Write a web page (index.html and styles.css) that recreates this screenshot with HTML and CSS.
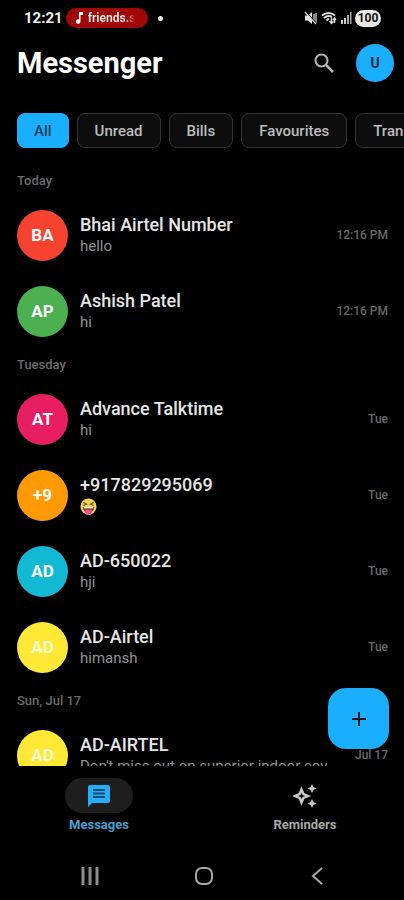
FILE: index.html
```html
<!DOCTYPE html>
<html lang="en">
<head>
<meta charset="utf-8">
<meta name="viewport" content="width=device-width, initial-scale=1">
<title>Messenger</title>
<link rel="stylesheet" href="styles.css">
</head>
<body>
<div class="status-bar">
  <span class="clock">12:21</span>
  <span class="media-pill">
    <svg width="9" height="12" viewBox="0 0 9 12" aria-hidden="true"><path d="M4 0h4v3H5.500v6.500A2.300 2.300 0 1 1 4 7.400z" fill="#fff"/></svg>
    <span class="media-title">friends.s</span>
  </span>
  <span class="status-dot"></span>
  <span class="status-icons">
    <svg width="14" height="14" viewBox="0 0 14 14" aria-hidden="true"><path d="M1 4.500h3L8 1v12L4 9.500H1z" fill="#e6e6e6"/><path d="M10 3v8M12 2v10" stroke="#bbb" stroke-width="1.500"/><path d="M2 1l10 11" stroke="#000" stroke-width="1.200"/><path d="M1 1l11 12" stroke="#ddd" stroke-width="1.200"/></svg>
    <svg width="16" height="14" viewBox="0 0 16 14" fill="none" aria-hidden="true"><path d="M1 4.500Q7.500-.5 14 4.500M3 7Q7 3.500 11 6M5.500 9.500l2.500-2" stroke="#ddd" stroke-width="1.900"/><path d="M10.500 12V6.500M8.500 10l2 2.500 2-2M13.500 12V7l-1.500 2m1.500-2L15 9" stroke="#ddd" stroke-width="1.400"/></svg>
    <svg width="12" height="12" viewBox="0 0 12 12" aria-hidden="true"><path d="M1 8h2v4H1zM4 6h2v6H4z" fill="#ccc"/><path d="M7 3h2v9H7zM10 0h1.500v12H10z" fill="#aaa"/></svg>
    <span class="battery">100</span>
  </span>
</div>

<header class="app-header">
  <h1>Messenger</h1>
  <button class="icon-button" type="button" aria-label="Search">
    <svg width="20" height="20" viewBox="0 0 20 20" fill="none" stroke="#b4b4b4" stroke-width="2"><circle cx="7.500" cy="7.500" r="6"/><path d="M12 12l7 7" stroke-width="2.500"/></svg>
  </button>
  <button class="profile" type="button" aria-label="Profile">U</button>
</header>

<nav class="filters" aria-label="Filters">
  <button class="chip chip-active" type="button">All</button>
  <button class="chip" type="button">Unread</button>
  <button class="chip" type="button">Bills</button>
  <button class="chip" type="button">Favourites</button>
  <button class="chip" type="button">Transactions</button>
</nav>

<main class="content">
  <div class="threads">
    <h2>Today</h2>
    <ul>
      <li class="thread"><span class="avatar red">BA</span><div class="summary"><p class="name">Bhai Airtel Number</p><p class="preview">hello</p></div><time>12:16 PM</time></li>
      <li class="thread"><span class="avatar green">AP</span><div class="summary"><p class="name">Ashish Patel</p><p class="preview">hi</p></div><time>12:16 PM</time></li>
    </ul>
    <h2>Tuesday</h2>
    <ul>
      <li class="thread"><span class="avatar pink">AT</span><div class="summary"><p class="name">Advance Talktime</p><p class="preview">hi</p></div><time>Tue</time></li>
      <li class="thread"><span class="avatar orange">+9</span><div class="summary"><p class="name">+917829295069</p><p class="preview">
        <svg class="emoji" width="17" height="17" viewBox="0 0 18 18" role="img" aria-label="Squinting face with tongue"><circle cx="9" cy="9" r="8.500" fill="#fbd552"/><path d="M3.500 4.500L7 6.500 3.500 8M14.500 4.500L11 6.500 14.500 8" fill="none" stroke="#6b4a1e" stroke-width="1.200"/><path d="M3 9.500h12c0 4-2.500 6-6 6s-6-2-6-6z" fill="#8b2f2c"/><path d="M4 9.500h10v1.500H4z" fill="#fff"/><path d="M5.500 12.500h7V15a3.500 3 0 0 1-7 0z" fill="#f0568d"/></svg>
      </p></div><time>Tue</time></li>
      <li class="thread"><span class="avatar cyan">AD</span><div class="summary"><p class="name">AD-650022</p><p class="preview">hji</p></div><time>Tue</time></li>
      <li class="thread"><span class="avatar yellow">AD</span><div class="summary"><p class="name">AD-Airtel</p><p class="preview">himansh</p></div><time>Tue</time></li>
    </ul>
    <h2>Sun, Jul 17</h2>
    <ul>
      <li class="thread"><span class="avatar yellow">AD</span><div class="summary"><p class="name">AD-AIRTEL</p><p class="preview">Don't miss out on superior indoor cov</p></div><time>Jul 17</time></li>
    </ul>
  </div>
  <button class="compose" type="button" aria-label="New message">
    <svg width="16" height="16" viewBox="0 0 16 16" stroke="#07121a" stroke-width="2"><path d="M8 1v14M1 8h14"/></svg>
  </button>
</main>

<nav class="tabs" aria-label="Main">
  <a class="tab tab-active" href="#messages">
    <span class="tab-icon"><svg width="24" height="24" viewBox="0 0 24 24" aria-hidden="true"><path d="M3 1h18a2 2 0 0 1 2 2v14a2 2 0 0 1-2 2H5l-4 4V3a2 2 0 0 1 2-2z" fill="#22aef8"/><path d="M6 6h12M6 9.500h12M6 13h12" stroke="#124a6b" stroke-width="2"/></svg></span>
    Messages
  </a>
  <a class="tab" href="#reminders">
    <span class="tab-icon"><svg width="24" height="24" viewBox="0 0 24 24" aria-hidden="true"><path d="M8.500 5.500l1.900 4.600L15 12l-4.600 1.900-1.900 4.600-1.900-4.600L2 12l4.600-1.900z" fill="none" stroke="#c6c6c6" stroke-width="2.500"/><path d="M19 0l1.400 3.100L23.500 4.500l-3.100 1.400L19 9l-1.400-3.100-3.100-1.400 3.100-1.400zM19 15l1.400 3.100 3.100 1.400-3.100 1.400L19 24l-1.400-3.100-3.100-1.400 3.100-1.400z" fill="#c6c6c6"/></svg></span>
    Reminders
  </a>
</nav>

<div class="system-nav">
  <button class="icon-button" type="button" aria-label="Recent apps"><svg width="18" height="18" viewBox="0 0 18 18" stroke="#8c8c8c" stroke-width="3"><path d="M2 0v18M9 0v18M16 0v18"/></svg></button>
  <button class="icon-button" type="button" aria-label="Home"><svg width="20" height="20" viewBox="0 0 20 20" fill="none" stroke="#a8a8a8" stroke-width="2"><rect x="2" y="2" width="16" height="16" rx="6"/></svg></button>
  <button class="icon-button" type="button" aria-label="Back"><svg width="12" height="18" viewBox="0 0 12 18" fill="none" stroke="#a8a8a8" stroke-width="2"><path d="M11 1L2 9l9 8"/></svg></button>
</div>
</body>
</html>
```

FILE: styles.css
```css
* {
  box-sizing: border-box;
}

body {
  display: flex;
  flex-direction: column;
  height: 100vh;
  margin: 0;
  background: #000;
  color: #e6e6e6;
  font-family: Roboto, "Liberation Sans", sans-serif;
}

h1, h2, p, ul {
  margin: 0;
  padding: 0;
}

button {
  padding: 0;
  border: 0;
  font-family: inherit;
  cursor: pointer;
}

svg {
  display: block;
}

.status-bar {
  display: flex;
  align-items: center;
  height: 36px;
  padding: 0 23px 0 24px;
}

.clock {
  color: #f0f0f0;
  font-size: 15px;
  font-weight: 700;
}

.media-pill {
  display: flex;
  align-items: center;
  gap: 4px;
  width: 82px;
  height: 20px;
  margin-left: 3px;
  padding: 0 9px;
  border-radius: 10px;
  background: #a00808;
}

.media-title {
  overflow: hidden;
  background: linear-gradient(90deg, #eee 80%, #a00808);
  background-clip: text;
  color: transparent;
  font-size: 12px;
  font-weight: 700;
}

.status-dot {
  width: 5px;
  height: 5px;
  margin-left: 10px;
  border-radius: 50%;
  background: #eee;
}

.status-icons {
  display: flex;
  align-items: center;
  gap: 3px;
  margin-left: auto;
}

.battery {
  width: 26px;
  border-radius: 9px;
  background: #e8e8e8;
  color: #111;
  font-size: 12px;
  font-weight: 700;
  line-height: 17px;
  text-align: center;
}

.app-header {
  display: flex;
  align-items: center;
  height: 54px;
  padding: 0 10px 0 17px;
}

h1 {
  flex: 1;
  color: #fff;
  font-size: 29px;
  font-weight: 700;
}

.icon-button {
  display: grid;
  place-items: center;
  width: 40px;
  height: 40px;
  background: none;
}

.profile {
  width: 38px;
  height: 38px;
  margin-left: 12px;
  border-radius: 50%;
  background: #1aaefe;
  color: #07293d;
  font-size: 14px;
  font-weight: 700;
}

.filters {
  display: flex;
  gap: 8px;
  padding: 23px 0 17px 17px;
  overflow: hidden;
}

.chip {
  flex: none;
  height: 35px;
  padding: 0 17px;
  border: 1px solid #343434;
  border-radius: 8px;
  background: #0d0d0d;
  color: #bcbcbc;
  font-size: 15px;
  font-weight: 500;
}

.chip-active {
  padding: 0 16px;
  border-color: #1aaefe;
  background: #1aaefe;
  color: #0a3e5c;
}

.content {
  position: relative;
  flex: 1;
  min-height: 0;
}

.threads {
  height: 100%;
  overflow-y: auto;
  scrollbar-width: none;
}

h2 {
  padding-left: 17px;
  color: #6c6c6c;
  font-size: 13px;
  font-weight: 500;
  line-height: 32px;
}

ul {
  list-style: none;
}

.thread {
  display: flex;
  align-items: center;
  height: 76px;
  padding: 0 16px 0 17px;
}

.avatar {
  flex: none;
  width: 51px;
  border-radius: 50%;
  color: #fff;
  font-size: 17px;
  font-weight: 700;
  line-height: 51px;
  text-align: center;
}

.red { background: #f6432f; }
.green { background: #4caf50; }
.pink { background: #e81e63; }
.orange { background: #ff9a04; }
.cyan { background: #12b9d3; }
.yellow { background: #ffe836; color: #fffbd0; }

.summary {
  flex: 1;
  min-width: 0;
  padding-left: 12px;
}

.name {
  color: #e6e6e6;
  font-size: 18px;
  font-weight: 500;
  line-height: 22px;
}

.preview {
  height: 20px;
  overflow: hidden;
  color: #929292;
  font-size: 15px;
  line-height: 20px;
  white-space: nowrap;
}

.emoji {
  margin-top: 2px;
}

time {
  color: #696969;
  font-size: 12px;
  font-weight: 500;
}

.compose {
  position: absolute;
  right: 15px;
  bottom: 17px;
  display: grid;
  place-items: center;
  width: 61px;
  height: 61px;
  border-radius: 18px;
  background: #1aaefe;
}

.tabs {
  display: flex;
  justify-content: space-between;
  height: 86px;
  padding: 12px 65px 0;
}

.tab {
  display: flex;
  flex-direction: column;
  align-items: center;
  gap: 4px;
  width: 68px;
  color: #a8a8a8;
  font-size: 13px;
  font-weight: 700;
  line-height: 16px;
  text-decoration: none;
}

.tab-icon {
  display: grid;
  place-items: center;
  width: 68px;
  height: 35px;
  border-radius: 18px;
}

.tab-active {
  color: #4a9fd4;
}

.tab-active .tab-icon {
  background: #1e1e1e;
}

.system-nav {
  display: flex;
  align-items: center;
  justify-content: space-between;
  height: 48px;
  padding: 0 67px 0 70px;
}
```
